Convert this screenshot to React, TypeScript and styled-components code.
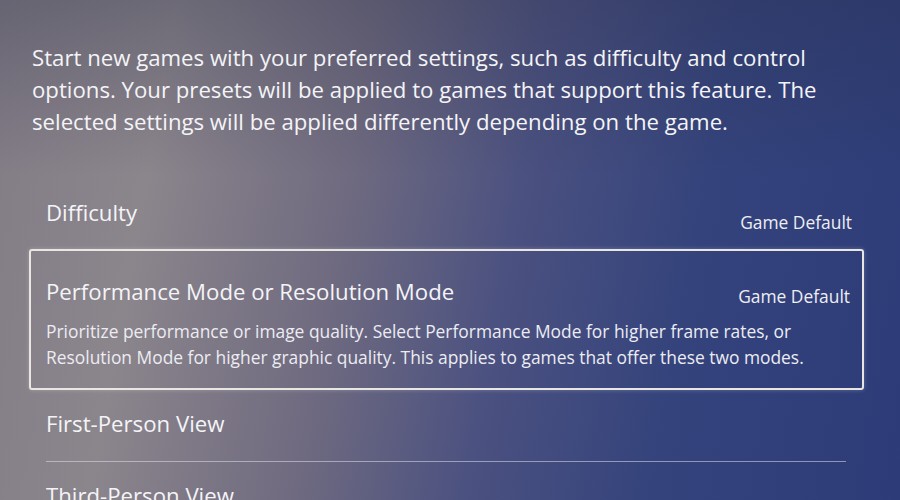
import styled, { createGlobalStyle } from "styled-components";

const GlobalStyle = createGlobalStyle`
  html, body {
    margin: 0;
    padding: 0;
    background: #3a3f66;
  }
  * {
    box-sizing: border-box;
  }
`;

type Preset = {
  label: string;
  value?: string;
  description?: string[];
  focused?: boolean;
};

const presets: Preset[] = [
  { label: "Difficulty", value: "Game Default" },
  {
    label: "Performance Mode or Resolution Mode",
    value: "Game Default",
    focused: true,
    description: [
      "Prioritize performance or image quality. Select Performance Mode for higher frame rates, or",
      "Resolution Mode for higher graphic quality. This applies to games that offer these two modes.",
    ],
  },
  { label: "First-Person View" },
  { label: "Third-Person View" },
];

export default function App() {
  return (
    <>
      <GlobalStyle />
      <Screen>
        <Intro>
          Start new games with your preferred settings, such as difficulty and control
          <br />
          options. Your presets will be applied to games that support this feature. The
          <br />
          selected settings will be applied differently depending on the game.
        </Intro>
        <List>
          {presets.map((item, index) => (
            <Row key={item.label} $focused={!!item.focused} $divider={index === 2}>
              <RowHead>
                <Label>{item.label}</Label>
                {item.value && <Value $focused={!!item.focused}>{item.value}</Value>}
              </RowHead>
              {item.description && (
                <Description>
                  {item.description.map((line) => (
                    <span key={line}>{line}</span>
                  ))}
                </Description>
              )}
            </Row>
          ))}
        </List>
      </Screen>
    </>
  );
}

const Screen = styled.div`
  width: 900px;
  height: 500px;
  overflow: hidden;
  padding: 42px 36px 0 29px;
  font-family: "Open Sans", "Noto Sans", sans-serif;
  color: #f2f2f6;
  background:
    linear-gradient(180deg, rgba(40, 44, 70, 0.3) 0%, rgba(40, 44, 70, 0) 35%),
    linear-gradient(
      100deg,
      #827c86 0%,
      #8b858c 18%,
      #706b80 38%,
      #4b5180 56%,
      #34437c 75%,
      #2d3c78 100%
    );
`;

const Intro = styled.p`
  margin: 0 0 0 3px;
  font-size: 22.2px;
  line-height: 32px;
  color: #f4f4f7;
  white-space: nowrap;
`;

const List = styled.div`
  margin-top: 59px;
  display: flex;
  flex-direction: column;
`;

const Row = styled.div<{ $focused: boolean; $divider: boolean }>`
  display: flex;
  flex-direction: column;
  padding: ${(p) => (p.$focused ? "25px 12px 0 15px" : "0 12px 0 17px")};
  margin: ${(p) => (p.$focused ? "20px 0 18px" : "0")};
  border: ${(p) => (p.$focused ? "2px solid #e8e6e0" : "none")};
  border-radius: 3px;
  box-shadow: ${(p) => (p.$focused ? "0 0 4px rgba(255, 255, 255, 0.25)" : "none")};
  height: ${(p) => (p.$focused ? "141px" : "auto")};
  position: relative;

  ${(p) =>
    p.$divider &&
    `
    padding-bottom: 22px;
    margin-bottom: 18px;
    &::after {
      content: "";
      position: absolute;
      left: 17px;
      right: 18px;
      bottom: 0;
      height: 1px;
      background: rgba(220, 222, 235, 0.55);
    }
  `}
`;

const RowHead = styled.div`
  display: flex;
  justify-content: space-between;
  align-items: baseline;
`;

const Label = styled.span`
  font-size: 22.2px;
  line-height: 32px;
  color: #f4f4f7;
  white-space: nowrap;
`;

const Value = styled.span<{ $focused: boolean }>`
  font-size: 17.4px;
  line-height: 24px;
  color: #eeeef3;
  position: relative;
  top: ${(p) => (p.$focused ? "3px" : "8px")};
`;

const Description = styled.div`
  margin-top: 10px;
  display: flex;
  flex-direction: column;
  font-size: 17.4px;
  line-height: 26px;
  color: #ececf2;

  & > span {
    white-space: nowrap;
  }
`;
